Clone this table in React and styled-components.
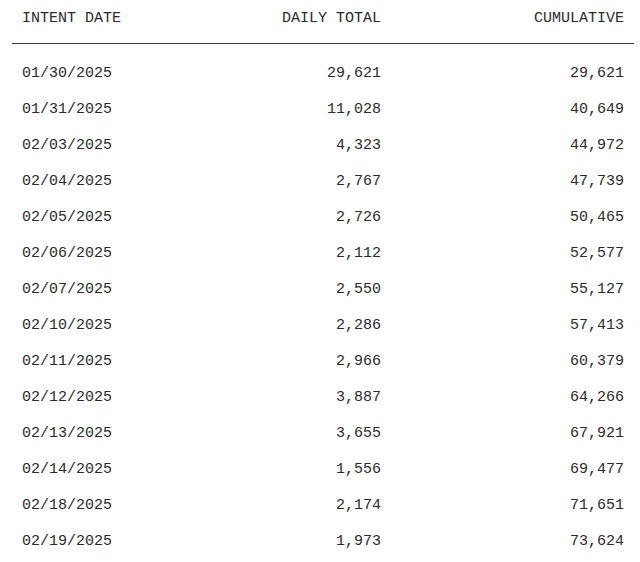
import React from 'react'
import styled, { createGlobalStyle } from 'styled-components'

const rows = [
  ['01/30/2025', '29,621', '29,621'],
  ['01/31/2025', '11,028', '40,649'],
  ['02/03/2025', '4,323', '44,972'],
  ['02/04/2025', '2,767', '47,739'],
  ['02/05/2025', '2,726', '50,465'],
  ['02/06/2025', '2,112', '52,577'],
  ['02/07/2025', '2,550', '55,127'],
  ['02/10/2025', '2,286', '57,413'],
  ['02/11/2025', '2,966', '60,379'],
  ['02/12/2025', '3,887', '64,266'],
  ['02/13/2025', '3,655', '67,921'],
  ['02/14/2025', '1,556', '69,477'],
  ['02/18/2025', '2,174', '71,651'],
  ['02/19/2025', '1,973', '73,624'],
]

const App = () => (
  <>
    <GlobalStyle />
    <Page>
      <Table>
        <HeadRow>
          <Cell>INTENT DATE</Cell>
          <Cell $right>DAILY TOTAL</Cell>
          <Cell $right>CUMULATIVE</Cell>
        </HeadRow>
        <Body>
          {rows.map(([date, daily, total]) => (
            <Row key={date}>
              <Cell>{date}</Cell>
              <Cell $right>{daily}</Cell>
              <Cell $right>{total}</Cell>
            </Row>
          ))}
        </Body>
      </Table>
    </Page>
  </>
)

const GlobalStyle = createGlobalStyle`
  body {
    margin: 0;
    background: #fff;
    font-family: "Liberation Mono", "Courier New", monospace;
    color: #2b2b2b;
  }
`

const Page = styled.div`
  padding: 0 6px 0 12px;
`

const Table = styled.div`
  width: 622px;
`

const Row = styled.div`
  display: grid;
  grid-template-columns: 136px 243px 243px;
  font-size: 15px;
  line-height: 18px;
`

const HeadRow = styled(Row)`
  height: 44px;
  box-sizing: border-box;
  padding-top: 10px;
  border-bottom: 1px solid #3a3a3a;
`

const Body = styled.div`
  padding-top: 12px;

  ${Row} {
    padding: 9px 0;
  }
`

const Cell = styled.div`
  padding: 0 10px;
  white-space: nowrap;
  text-align: ${(props) => (props.$right ? 'right' : 'left')};
`

export default App
